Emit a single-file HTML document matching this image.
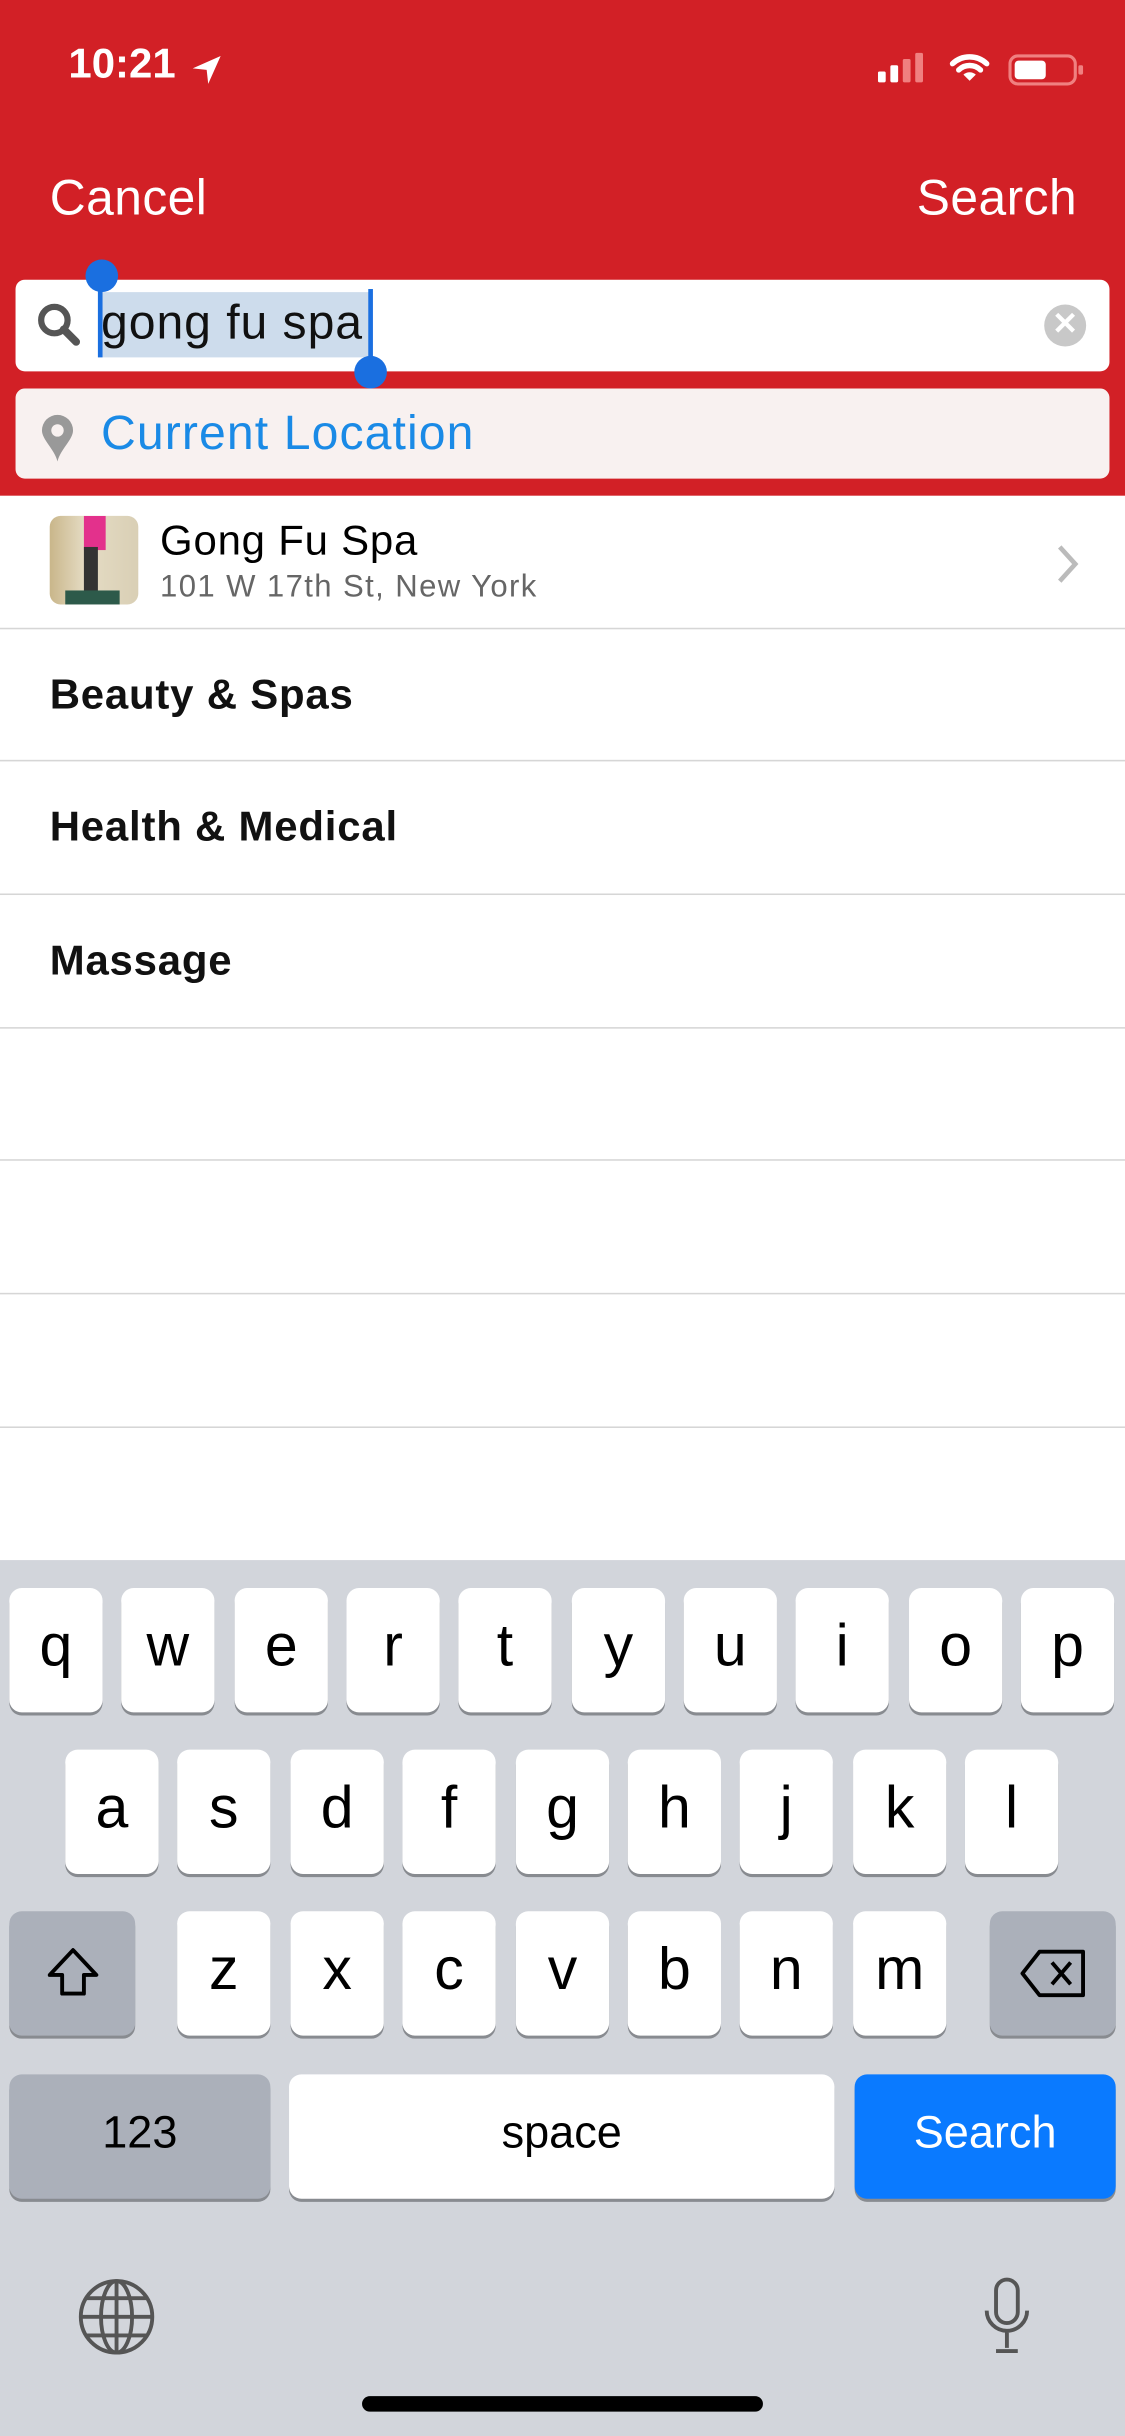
<!DOCTYPE html>
<html><head><meta charset="utf-8"><style>
*{margin:0;padding:0;box-sizing:border-box}
html,body{width:1125px;height:2436px;overflow:hidden;background:#fff}
#s{position:absolute;left:0;top:0;width:724px;height:1568px;transform:scale(1.55387);transform-origin:0 0;font-family:"Liberation Sans",sans-serif}
.a{position:absolute}
.hdr{left:0;top:0;width:724px;height:319px;background:#d22026}
.w{color:#fff}
.line{left:0;width:724px;height:1px;background:#d6d6d6}
.row{left:32px;font-size:27px;font-weight:bold;color:#111;letter-spacing:0.5px}
.kb{left:0;top:1004px;width:724px;height:564px;background:#d2d5db}
.k{position:absolute;width:60px;height:80px;background:#fff;border-radius:8px;box-shadow:0 2px 0 #888b90;font-size:38px;text-align:center;line-height:76px;color:#000}
.g{background:#abb0ba}
</style></head><body><div id="s">
<div class="a hdr"></div>
<div class="a w" style="left:44px;top:26px;font-size:27px;font-weight:bold">10:21</div>
<svg class="a" style="left:122px;top:34px" width="22" height="22" viewBox="0 0 22 22"><path d="M20 2 L2 10 L11 11 L12 20 Z" fill="#fff"/></svg>
<svg class="a" style="left:565px;top:32px" width="135" height="24" viewBox="0 0 135 24">
<rect x="0" y="14" width="5" height="7" rx="1" fill="#fff"/><rect x="8" y="10" width="5" height="11" rx="1" fill="#fff"/><rect x="16" y="6" width="5" height="15" rx="1" fill="#f08080"/><rect x="24" y="2" width="5" height="19" rx="1" fill="#f08080"/>
<path d="M48 9 a16 16 0 0 1 22 0 M52 13 a10 10 0 0 1 14 0" stroke="#fff" stroke-width="3.5" fill="none" stroke-linecap="round"/><path d="M55 16 L59 20 L63 16 a6 6 0 0 0 -8 0Z" fill="#fff"/>
<rect x="85" y="4" width="42" height="18" rx="5" fill="none" stroke="#f08080" stroke-width="2"/><rect x="88" y="7" width="20" height="12" rx="2.5" fill="#fff"/><rect x="129" y="10" width="3" height="6" rx="1" fill="#f08080"/></svg>
<div class="a w" style="left:32px;top:109px;font-size:32px;letter-spacing:0.3px">Cancel</div>
<div class="a w" style="left:590px;top:109px;font-size:32px;letter-spacing:0.3px">Search</div>
<div class="a" style="left:10px;top:180px;width:704px;height:59px;background:#fff;border-radius:6px"></div>
<svg class="a" style="left:22px;top:193px" width="32" height="32" viewBox="0 0 32 32"><circle cx="13" cy="13" r="8.5" stroke="#555" stroke-width="4" fill="none"/><path d="M19 19 L27 27" stroke="#555" stroke-width="5" stroke-linecap="round"/></svg>
<div class="a" style="left:66px;top:188px;width:173px;height:42px;background:#cddcec"></div>
<div class="a" style="left:65px;top:190px;font-size:31px;color:#111;letter-spacing:0.6px">gong fu spa</div>
<div class="a" style="left:63px;top:186px;width:3px;height:44px;background:#1a6fe0"></div>
<div class="a" style="left:237px;top:186px;width:3px;height:48px;background:#1a6fe0"></div>
<div class="a" style="left:55px;top:167px;width:21px;height:21px;border-radius:50%;background:#1a6fe0"></div>
<div class="a" style="left:228px;top:229px;width:21px;height:21px;border-radius:50%;background:#1a6fe0"></div>
<div class="a" style="left:672px;top:196px;width:27px;height:27px;border-radius:50%;background:#c8c8c8;color:#fff;font-size:20px;text-align:center;line-height:27px;font-weight:bold">✕</div>
<div class="a" style="left:10px;top:250px;width:704px;height:58px;background:#f8f1f0;border-radius:6px"></div>
<svg class="a" style="left:25px;top:265px" width="24" height="34" viewBox="0 0 24 34"><path d="M12 2 a10 10 0 0 1 10 10 c0 6 -8 12 -10 20 c-2 -8 -10 -14 -10 -20 a10 10 0 0 1 10 -10Z" fill="#999"/><circle cx="12" cy="12" r="4" fill="#f8f1f0"/></svg>
<div class="a" style="left:65px;top:261px;font-size:31px;color:#1a8ae6;letter-spacing:0.7px">Current Location</div>
<div class="a" style="left:32px;top:332px;width:57px;height:57px;border-radius:7px;background:linear-gradient(90deg,#c9b68a,#e5dcc4 40%,#d9cfb5);overflow:hidden"><div style="position:absolute;left:22px;top:0;width:14px;height:22px;background:#e3318c"></div><div style="position:absolute;left:22px;top:20px;width:9px;height:30px;background:#333"></div><div style="position:absolute;left:10px;top:48px;width:35px;height:9px;background:#2d5a4a"></div></div>
<div class="a" style="left:103px;top:333px;font-size:27px;color:#000;letter-spacing:0.5px">Gong Fu Spa</div>
<div class="a" style="left:103px;top:367px;font-size:20px;color:#666;letter-spacing:0.9px">101 W 17th St, New York</div>
<svg class="a" style="left:678px;top:349px" width="18" height="28" viewBox="0 0 18 28"><path d="M4 3 L14 14 L4 25" stroke="#bbb" stroke-width="3" fill="none"/></svg>
<div class="a line" style="top:404px"></div>
<div class="a row" style="top:432px">Beauty &amp; Spas</div>
<div class="a line" style="top:489px"></div>
<div class="a row" style="top:517px">Health &amp; Medical</div>
<div class="a line" style="top:575px"></div>
<div class="a row" style="top:603px">Massage</div>
<div class="a line" style="top:661px"></div>
<div class="a line" style="top:746px"></div>
<div class="a line" style="top:832px"></div>
<div class="a line" style="top:918px"></div>
<div class="a kb"></div>
<div class="k" style="left:6px;top:1022px">q</div><div class="k" style="left:78px;top:1022px">w</div><div class="k" style="left:151px;top:1022px">e</div><div class="k" style="left:223px;top:1022px">r</div><div class="k" style="left:295px;top:1022px">t</div><div class="k" style="left:368px;top:1022px">y</div><div class="k" style="left:440px;top:1022px">u</div><div class="k" style="left:512px;top:1022px">i</div><div class="k" style="left:585px;top:1022px">o</div><div class="k" style="left:657px;top:1022px">p</div>
<div class="k" style="left:42px;top:1126px">a</div><div class="k" style="left:114px;top:1126px">s</div><div class="k" style="left:187px;top:1126px">d</div><div class="k" style="left:259px;top:1126px">f</div><div class="k" style="left:332px;top:1126px">g</div><div class="k" style="left:404px;top:1126px">h</div><div class="k" style="left:476px;top:1126px">j</div><div class="k" style="left:549px;top:1126px">k</div><div class="k" style="left:621px;top:1126px">l</div>
<div class="k g" style="left:6px;top:1230px;width:81px"><svg width="40" height="40" viewBox="0 0 40 40" style="margin-top:20px"><path d="M20 5 L35 21 H27 V33 H13 V21 H5 Z" fill="none" stroke="#000" stroke-width="2.5" stroke-linejoin="round"/></svg></div>
<div class="k" style="left:114px;top:1230px">z</div><div class="k" style="left:187px;top:1230px">x</div><div class="k" style="left:259px;top:1230px">c</div><div class="k" style="left:332px;top:1230px">v</div><div class="k" style="left:404px;top:1230px">b</div><div class="k" style="left:476px;top:1230px">n</div><div class="k" style="left:549px;top:1230px">m</div>
<div class="k g" style="left:637px;top:1230px;width:81px"><svg width="46" height="34" viewBox="0 0 46 34" style="margin-top:23px"><path d="M14 3 H42 V31 H14 L3 17 Z" fill="none" stroke="#000" stroke-width="2.5" stroke-linejoin="round"/><path d="M22 10 L34 24 M34 10 L22 24" stroke="#000" stroke-width="2.5"/></svg></div>
<div class="k g" style="left:6px;top:1335px;width:168px;font-size:29px">123</div>
<div class="k" style="left:186px;top:1335px;width:351px;font-size:29px">space</div>
<div class="k" style="left:550px;top:1335px;width:168px;font-size:29px;background:#0a7aff;color:#fff">Search</div>
<svg class="a" style="left:49px;top:1465px" width="52" height="52" viewBox="0 0 52 52"><g fill="none" stroke="#555" stroke-width="2.5"><circle cx="26" cy="26" r="23"/><ellipse cx="26" cy="26" rx="10" ry="23"/><path d="M26 3 V49 M3 26 H49 M7 14 H45 M7 38 H45"/></g></svg>
<svg class="a" style="left:632px;top:1465px" width="32" height="52" viewBox="0 0 32 52"><g fill="none" stroke="#555" stroke-width="2.5"><rect x="9" y="2" width="14" height="28" rx="7"/><path d="M3 22 a13 13 0 0 0 26 0 M16 35 V46 M9 48 H23"/></g></svg>
<div class="a" style="left:233px;top:1542px;width:258px;height:10px;border-radius:5px;background:#000"></div>
</div></body></html>
